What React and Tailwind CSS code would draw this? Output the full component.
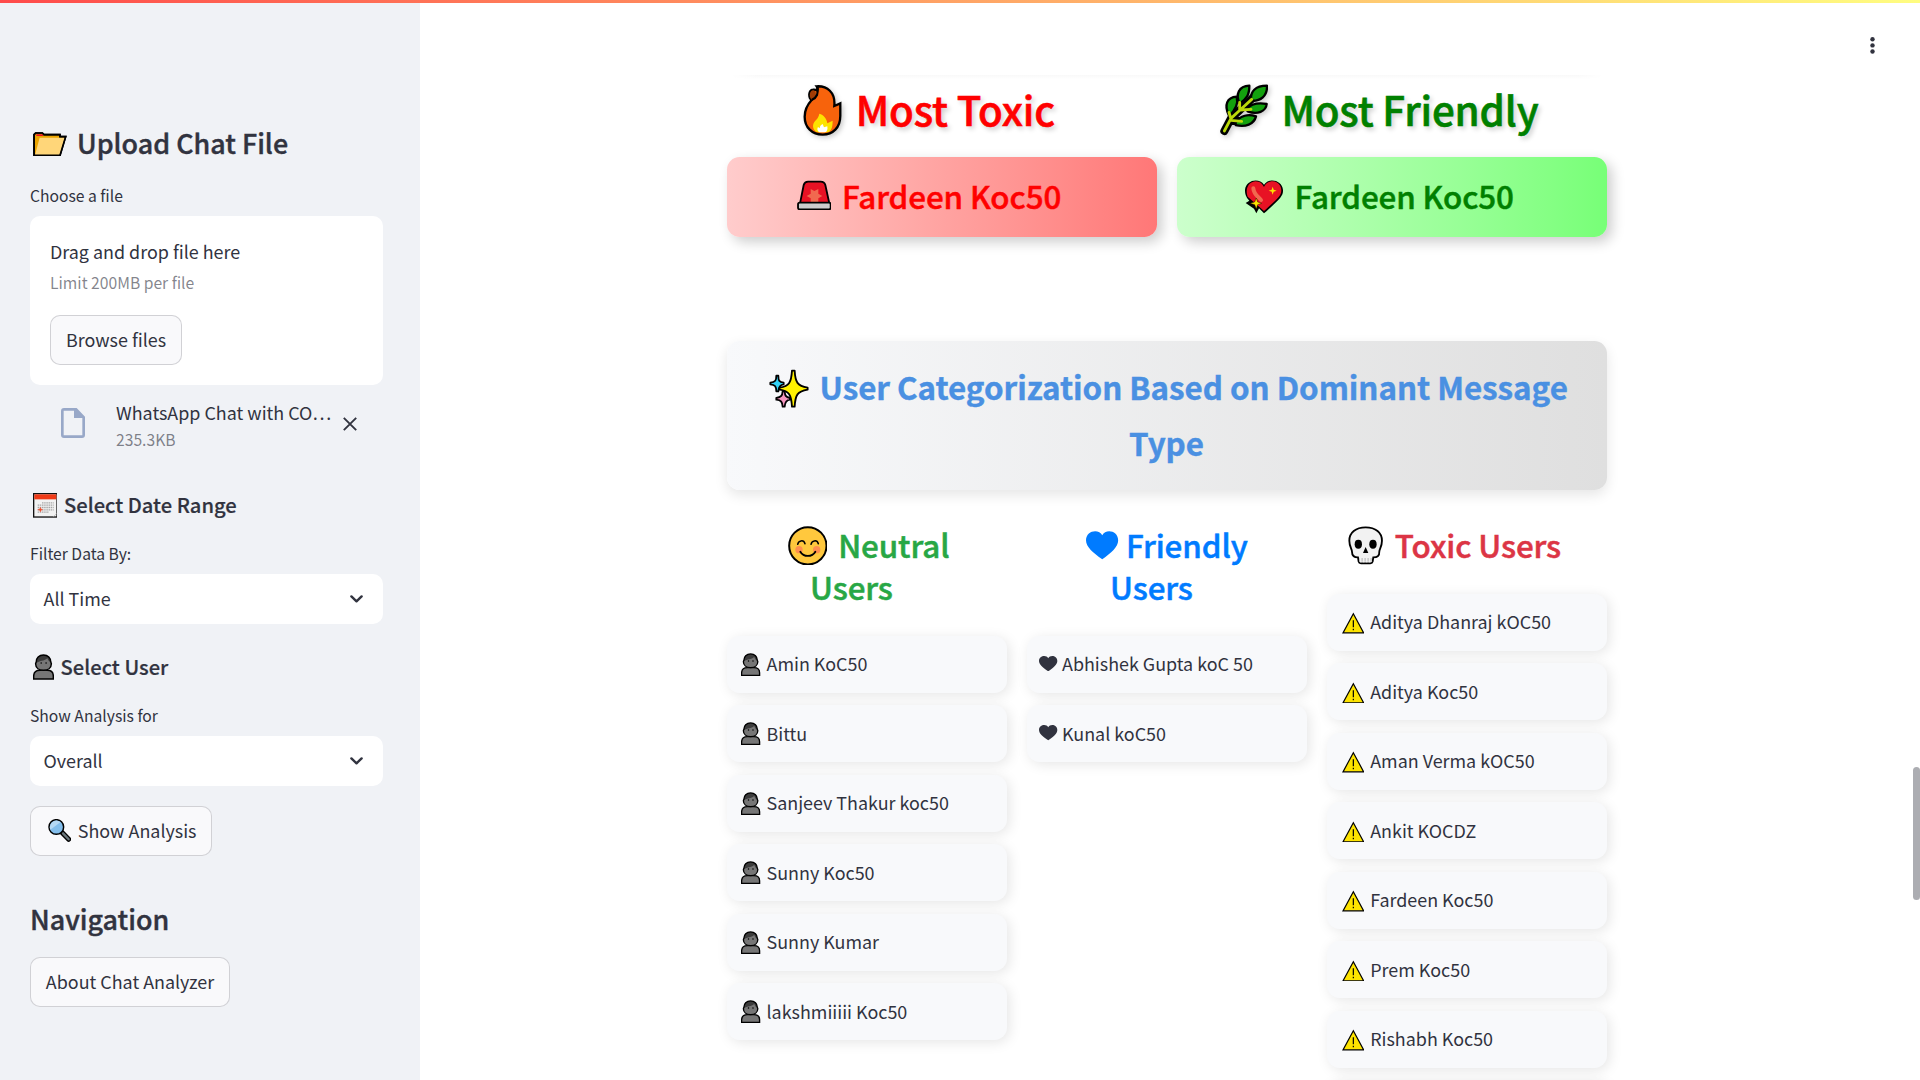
import React from "react";

const FONT = "font-['Noto_Sans_CJK_SC','Source_Sans_Pro',sans-serif]";

/* ---------- icons ---------- */

const Folder = ({ className }) => (
  <svg className={className} viewBox="100 96 101 72" width="33.7" height="24">
    <path d="M103 166V104L108 99H128L133 104H181V110H198L181 166Z" fill="#eba400" stroke="#000" strokeWidth="5" />
    <path d="M110 106V103H130V108H110Z" fill="#e81224" />
    <path d="M120 113H195L180 165H106Z" fill="#ffd679" />
    <path d="M103 166V104L108 99H128L133 104H181V110H198L181 166Z" fill="none" stroke="#000" strokeWidth="5" />
  </svg>
);

const Calendar = ({ className }) => (
  <svg className={className} viewBox="97 339 74 74" width="24.7" height="24.7">
    <rect x="99" y="341" width="70" height="70" fill="#f2f2f2" stroke="#111" strokeWidth="4" />
    <rect x="101" y="343" width="66" height="15" fill="#f03a17" />
    <path d="M124 368.500H159M111 375.500H159M111 382.500H159M111 389.500H159M111 396.500H145" stroke="#a6a6a6" strokeWidth="4" strokeDasharray="4.5 2" />
    <path d="M119 382L121 387L126 389L121 391L119 396L117 391L111 389L117 387Z" fill="#f04a28" stroke="#f04a28" strokeWidth="1" />
    <path d="M158 410L168 400" stroke="#bbb" strokeWidth="2" />
  </svg>
);

const Person = ({ className, w = 21.3, h = 25.7 }) => (
  <svg className={className} viewBox="97 823 65 77" width={w} height={h} preserveAspectRatio="none">
    <path d="M99 898V889Q100 872 118 872H140Q159 872 159 889V898Z" fill="#767676" stroke="#000" strokeWidth="4.5" />
    <path d="M129 826C143 826 151 836 151 846L153 852C153 864 143 872 129 872C115 872 105 864 105 852L107 846C107 836 115 826 129 826Z" fill="#767676" />
    <path d="M107 850C106 834 115 826 129 826C143 826 152 834 151 848C146 846 143 841 141 836C134 843 124 842 111 848Z" fill="#3b3b3b" />
    <path d="M129 826C143 826 151 836 151 846L153 852C153 864 143 872 129 872C115 872 105 864 105 852L107 846C107 836 115 826 129 826Z" fill="none" stroke="#000" strokeWidth="4.5" />
    <circle cx="122" cy="850" r="2.4" fill="#000" />
    <circle cx="137" cy="850" r="2.4" fill="#000" />
  </svg>
);

const Magnifier = ({ className }) => (
  <svg className={className} viewBox="144 359 70 69" width="23.3" height="23">
    <path d="M184 397L206 420" stroke="#000" strokeWidth="15" strokeLinecap="round" />
    <path d="M189 402L206 420" stroke="#6b787d" strokeWidth="7" strokeLinecap="round" />
    <circle cx="169" cy="383" r="22" fill="#83beec" stroke="#000" strokeWidth="4.5" />
    <path d="M151 391A20 20 0 0 1 182 368Z" fill="#b4d8f4" />
  </svg>
);

const Doc = ({ className }) => (
  <svg className={className} viewBox="183 84 72 90" width="24" height="30">
    <path d="M192 84H230L255 110V165Q255 174 246 174H192Q183 174 183 165V93Q183 84 192 84ZM191 92V166H247V114H222V92Z" fill="#98a8c8" fillRule="evenodd" />
  </svg>
);

const Cross = ({ className }) => (
  <svg className={className} viewBox="0 0 14 14" width="14" height="14">
    <path d="M0.8 0.8L13.2 13.2M13.2 0.8L0.8 13.2" stroke="#31333f" strokeWidth="1.9" />
  </svg>
);

const Chevron = () => (
  <svg viewBox="0 0 13 8" width="13" height="8">
    <path d="M1.4 1.4L6.5 6.3L11.6 1.4" fill="none" stroke="#31333f" strokeWidth="2.4" strokeLinecap="round" strokeLinejoin="round" />
  </svg>
);

const Fire = ({ className }) => (
  <svg className={className} viewBox="250 74 118 154" width="39.3" height="51.3">
    <path d="M291 78C322 76 348 96 344 137L362 129V167C362 202 340 223 309 223C277 223 255 201 255 169C255 143 266 130 276 119C266 112 266 90 280 88C286 87 288 88 292 90C296 87 294 82 291 78Z" fill="#f7630c" stroke="#000" strokeWidth="7" />
    <path d="M276 119C268 111 268 93 280 90C291 93 291 106 284 113Z" fill="#a23c05" />
    <path d="M276 119C291 113 298 98 292 80" fill="none" stroke="#000" strokeWidth="7" />
    <path d="M296 216C283 214 278 202 281 191C284 181 296 177 299 160C312 164 321 174 323 189L339 181C339 200 336 213 322 216Z" fill="#fde300" />
    <path d="M300 216C291 211 293 204 295 200L300 204C301 197 304 193 309 191L313 201L323 198C325 208 322 215 316 216Z" fill="#fff" />
  </svg>
);

const Siren = ({ className }) => (
  <svg className={className} viewBox="229 360 104 91" width="34.7" height="30.3">
    <path d="M238 430L249 375Q252 365 262 365H300Q311 365 314 375L326 430Z" fill="#e81224" stroke="#000" strokeWidth="5.5" />
    <path d="M270 387L281 393L293 387V401L305 408L293 415V429H270V415L258 408L270 401Z" fill="#f1694f" />
    <rect x="232" y="428" width="98" height="20" rx="5" fill="#ccc" stroke="#000" strokeWidth="5.5" />
  </svg>
);

const Herb = ({ className }) => (
  <svg className={className} viewBox="179 163 146 155" width="48.7" height="51.7">
    <path d="M192 304L212 266L280 202M216 274H245" stroke="#000" strokeWidth="24" strokeLinecap="round" strokeLinejoin="round" fill="none" />
    <g fill="#13a10e" stroke="#000" strokeWidth="7" strokeLinejoin="round">
      <path d="M272 211C270 186 284 168 320 168C321 199 301 215 272 213Z" />
      <path d="M238 222C224 194 236 169 267 168C267 196 259 207 238 222Z" />
      <path d="M206 258C190 226 200 203 229 201C235 224 226 241 206 258Z" />
      <path d="M258 238C276 219 297 219 319 223C317 245 291 256 262 245Z" />
      <path d="M226 278C240 257 264 253 287 260C281 284 255 293 226 286Z" />
    </g>
    <path d="M192 304L212 266L240 240L274 209M206 248L212 268M238 218V242M240 241L272 239M212 272L244 275" stroke="#bad80a" strokeWidth="8.5" fill="none" strokeLinecap="round" strokeLinejoin="round" />
  </svg>
);

const SparkHeart = ({ className }) => (
  <svg className={className} viewBox="251 447 120 107" width="40" height="35.7">
    <path d="M311 550L296 535L288 550L281 536L256 519L267 512C256 500 254 492 254 480C256 450 296 442 311 464C326 442 366 450 368 480C369 498 358 508 311 550Z" fill="#000" />
    <path d="M311 543L262 500C255 484 260 456 285 454C300 454 307 463 311 471C315 463 322 454 337 454C355 455 363 469 363 482C362 498 350 508 311 543Z" fill="#e81224" />
    <path d="M279 475C280 492 291 498 302 510" fill="none" stroke="#f1694f" strokeWidth="12" strokeLinecap="round" />
    <path d="M337 470L340 479L349 482L340 485L337 494L334 485L325 482L334 479Z" fill="#fde300" />
    <path d="M288 504L292 516L304 520L292 524L288 537L283 524L269 520L283 516Z" fill="#fde300" stroke="#000" strokeWidth="1.2" />
  </svg>
);

const Sparkles = ({ className }) => (
  <svg className={className} viewBox="177 146 121 118" width="40.3" height="39.3">
    <g stroke="#000" strokeWidth="5.5" strokeLinejoin="round">
      <path d="M199 166H205C205 180 207 186 221 187V192C209 193 206 200 205 213H199C199 199 196 193 181 192V187C196 186 199 180 199 166Z" fill="#31d2f7" />
      <path d="M218 213H224C225 225 227 231 240 233V238C228 239 225 246 224 259H218C217 246 214 239 199 238V233C214 231 217 225 218 213Z" fill="#f495bf" />
      <path d="M246 151H254C256 186 262 197 293 202V208C262 213 256 224 254 259H246C244 224 238 212 209 208V202C238 197 244 186 246 151Z" fill="#fff100" />
    </g>
  </svg>
);

const Smile = ({ className }) => (
  <svg className={className} viewBox="233 617 119 119" width="39.7" height="39.7">
    <circle cx="292.5" cy="676.5" r="56" fill="#ffc83d" stroke="#000" strokeWidth="6" />
    <circle cx="266" cy="688" r="11" fill="#ff8f4f" />
    <circle cx="319" cy="688" r="11" fill="#ff8f4f" />
    <path d="M262 672C264 660 280 657 284 670M302 672C304 660 320 657 324 670" fill="none" stroke="#000" strokeWidth="4.5" strokeLinecap="round" />
    <path d="M270 694C280 711 305 711 315 694" fill="none" stroke="#000" strokeWidth="5.5" strokeLinecap="round" />
  </svg>
);

const Skull = ({ className }) => (
  <svg className={className} viewBox="563 617 106 117" width="35.3" height="39">
    <path d="M616 621C646 621 665 637 665 661C665 679 657 686 657 694C658 708 650 711 639 711L637 724Q636 729 630 729H602Q596 729 595 724L593 711C582 711 575 708 575 694C575 686 567 679 567 661C567 637 586 621 616 621Z" fill="#f2f2f2" stroke="#000" strokeWidth="5.5" />
    <path d="M597 713H635V724H597Z" fill="#ccc" />
    <path d="M601 712V726M610 712V726M619 712V726M628 712V726" stroke="#f2f2f2" strokeWidth="4" />
    <ellipse cx="594" cy="672" rx="11" ry="13.5" />
    <ellipse cx="638" cy="672" rx="11" ry="13.5" />
    <path d="M616 680L624 698H608Z" />
  </svg>
);

const Heart = ({ className, w, h }) => (
  <svg className={className} viewBox="1128 632 98 86" width={w} height={h} preserveAspectRatio="none" fill="currentColor">
    <path d="M1177 717C1150 699 1128 680 1128 660C1128 630 1167 624 1177 645C1187 624 1225 630 1225 660C1225 680 1204 699 1177 717Z" />
  </svg>
);

const Warning = () => (
  <svg className="mt-[18.5px] ml-[14.5px] shrink-0" viewBox="94 125 68 65" width="22.7" height="21.7">
    <path d="M128 130L159 187.500H97Z" fill="#fde300" stroke="#000" strokeWidth="3.6" />
    <path d="M128 150V171M128 175V180" stroke="#000" strokeWidth="3.6" />
  </svg>
);

/* ---------- sidebar ---------- */

const Label = ({ children, className = "" }) => (
  <div className={`h-7 text-[15.68px] leading-7 whitespace-nowrap ${className}`}>{children}</div>
);

const Button = ({ children, className = "" }) => (
  <button className={`flex h-[50px] items-center rounded-[10px] border border-[#31333f]/20 bg-[#f9f9fb] pb-[3px] text-[17.92px] leading-8 whitespace-nowrap ${className}`}>
    {children}
  </button>
);

const Select = ({ children, className = "" }) => (
  <div className={`flex h-[50px] items-center justify-between rounded-[10px] bg-white pr-5 pl-[13.5px] text-[17.92px] leading-8 ${className}`}>
    <span className="-mt-[3px]">{children}</span>
    <Chevron />
  </div>
);

const SIDE_H2 = "text-[26.88px] leading-9 font-medium whitespace-nowrap [-webkit-text-stroke:0.4px]";
const SIDE_H3 = "flex h-7 items-start text-[20.16px] leading-7 font-medium whitespace-nowrap [-webkit-text-stroke:0.2px]";

const Sidebar = () => (
  <aside className="h-[1080px] w-[420px] shrink-0 bg-[#f0f2f6] px-[30px] pt-[125px]">
    <div className="w-[353px]">
      <h2 className={`flex h-9 items-start pl-[3.3px] ${SIDE_H2}`}>
        <Folder className="mt-[7px] mr-[10px]" />
        Upload Chat File
      </h2>
      <Label className="mt-[21px]">Choose a file</Label>
      <section className="mt-[6px] h-[169px] rounded-[10px] bg-white px-5 pt-[19px]">
        <div className="h-8 text-[17.92px] leading-8">Drag and drop file here</div>
        <Label className="mt-[2px] text-[#31333f]/60">Limit 200MB per file</Label>
        <Button className="mt-[18px] w-[132px] justify-center">Browse files</Button>
      </section>
      <div className="mt-[12px] flex h-[54px]">
        <Doc className="mt-[11px] ml-[31px] shrink-0" />
        <div className="ml-[31px] w-[227.5px] shrink-0">
          <div className="h-[31px] text-[17.92px] leading-[30px] whitespace-nowrap">WhatsApp Chat with CO…</div>
          <div className="h-6 text-[15.68px] leading-6 text-[#31333f]/60">235.3KB</div>
        </div>
        <Cross className="mt-5 -ml-[0.5px] shrink-0" />
      </div>
      <h3 className={`mt-10 pl-[2.5px] ${SIDE_H3}`}>
        <Calendar className="mt-[2px] mr-[6.8px]" />
        Select Date Range
      </h3>
      <Label className="mt-[21px]">Filter Data By:</Label>
      <Select className="mt-[6px]">All Time</Select>
      <h3 className={`mt-[29px] pl-[2.5px] ${SIDE_H3}`}>
        <Person className="mt-[1.3px] mr-[6.8px]" />
        Select User
      </h3>
      <Label className="mt-[21px]">Show Analysis for</Label>
      <Select className="mt-[6px]">Overall</Select>
      <Button className="mt-5 w-[182px] pl-[17px]">
        <Magnifier className="mt-[1.5px] mr-[6.5px]" />
        Show Analysis
      </Button>
      <h2 className={`mt-[45px] h-9 ${SIDE_H2}`}>Navigation</h2>
      <Button className="mt-5 w-[200px] justify-center">About Chat Analyzer</Button>
    </div>
  </aside>
);

/* ---------- main ---------- */

const UserCard = ({ icon, children }) => (
  <li className="flex h-[57px] items-start rounded-[12.5px] bg-[#f8f9fb] text-[17.92px] leading-8 whitespace-nowrap shadow-[2.5px_2.5px_12.5px_rgba(0,0,0,0.1)]">
    {icon}
    <span className="mt-[11.7px]">{children}</span>
  </li>
);

const neutral = ["Amin KoC50", "Bittu", "Sanjeev Thakur koc50", "Sunny Koc50", "Sunny Kumar", "lakshmiiiii Koc50"];
const friendly = ["Abhishek Gupta koC 50", "Kunal koC50"];
const toxic = ["Aditya Dhanraj kOC50", "Aditya Koc50", "Aman Verma kOC50", "Ankit KOCDZ", "Fardeen Koc50", "Prem Koc50", "Rishabh Koc50"];

const LIST = "mt-[27.5px] grid gap-[12.5px]";
const COL_HEAD = "text-[31.36px] leading-[42px] font-medium tracking-[-0.1px] whitespace-nowrap [-webkit-text-stroke:0.5px]";
const TOP_HEAD = "flex h-[54px] items-start text-[40.32px] leading-[54px] font-medium tracking-[-0.15px] whitespace-nowrap text-shadow-[2.5px_2.5px_5px_rgba(0,0,0,0.2)] [-webkit-text-stroke:0.6px]";
const WINNER = "mt-[21px] flex h-20 items-start rounded-[12.5px] text-[31.36px] leading-[56px] font-medium tracking-[-0.1px] whitespace-nowrap shadow-[5px_5px_12.5px_rgba(0,0,0,0.2)] [-webkit-text-stroke:0.5px]";

const Main = () => (
  <main className="h-[1080px] grow overflow-hidden bg-white pt-[75px] pl-[307px]">
    <div className="w-[880px]">
      <div className="mx-1 h-[4px] bg-linear-to-b from-[#f9f9f9] to-white mask-x-from-97%" />
      <div className="mt-[3px] grid grid-cols-[430px_430px] gap-5">
        <div>
          <h1 className={`pl-[76px] text-[#ff0000] ${TOP_HEAD}`}>
            <Fire className="mt-[2.5px] mr-[13.5px] drop-shadow-[2.5px_2.5px_2.5px_rgba(0,0,0,0.2)]" />
            Most Toxic
          </h1>
          <div className={`bg-linear-to-r from-[#ffcccc] to-[#ff7777] pl-[69.5px] text-[#ff0000] ${WINNER}`}>
            <Siren className="mt-[23px] mr-[10.7px]" />
            <span className="mt-[11px]">Fardeen Koc50</span>
          </div>
        </div>
        <div>
          <h1 className={`pl-[42.500px] text-[#008000] ${TOP_HEAD}`}>
            <Herb className="mt-[2px] mr-[13.3px] drop-shadow-[2.5px_2.5px_2.5px_rgba(0,0,0,0.2)]" />
            Most Friendly
          </h1>
          <div className={`bg-linear-to-r from-[#ccffcc] to-[#77ff77] pl-[66.5px] text-[#008000] ${WINNER}`}>
            <SparkHeart className="mt-[22px] mr-[11px]" />
            <span className="mt-[11px]">Fardeen Koc50</span>
          </div>
        </div>
      </div>

      <div className="mt-[104px] h-[149px] rounded-[12.5px] bg-linear-to-r from-[#f8f9fb] to-[#dfdfdf] pt-[17.5px] text-[31.36px] leading-[56px] font-bold tracking-[-0.04px] whitespace-nowrap text-[#4a90e2] shadow-[0_5px_12.5px_rgba(0,0,0,0.1)] [-webkit-text-stroke:0.4px]">
        <div className="flex h-14 items-start pl-[42px]">
          <Sparkles className="mt-[10px] mr-[10.2px]" />
          User Categorization Based on Dominant Message
        </div>
        <div className="h-14 pr-px text-center">Type</div>
      </div>

      <div className="mt-[34px] grid grid-cols-[280px_280px_280px] items-start gap-5">
        <section>
          <h2 className={`${COL_HEAD} text-[#28a745]`}>
            <div className="flex h-[42px] items-start pl-[60.5px]">
              <Smile className="mt-[1.5px] mr-[11px]" />
              Neutral
            </div>
            <div className="h-[42px] pl-[83px]">Users</div>
          </h2>
          <ul className={LIST}>
            {neutral.map((n) => (
              <UserCard key={n} icon={<Person className="mt-[17px] mr-[6px] ml-[14px]" w={19.5} h={23} />}>{n}</UserCard>
            ))}
          </ul>
        </section>
        <section>
          <h2 className={`${COL_HEAD} text-[#007bff]`}>
            <div className="flex h-[42px] items-start pl-[59px]">
              <Heart className="mt-[7px] mr-[7.5px]" w={32.5} h={28.5} />
              Friendly
            </div>
            <div className="h-[42px] pl-[83px]">Users</div>
          </h2>
          <ul className={LIST}>
            {friendly.map((n) => (
              <UserCard key={n} icon={<Heart className="mt-[20px] mr-[4.5px] ml-[12px]" w={18.5} h={15.5} />}>{n}</UserCard>
            ))}
          </ul>
        </section>
        <section>
          <h2 className={`${COL_HEAD} text-[#dc3545]`}>
            <div className="flex h-[42px] items-start pl-[20.500px]">
              <Skull className="mt-[1.5px] mr-[12px]" />
              Toxic Users
            </div>
          </h2>
          <ul className={LIST}>
            {toxic.map((n) => (
              <UserCard key={n} icon={<Warning />}>
                <span className="pl-[6px]">{n}</span>
              </UserCard>
            ))}
            <li className="h-[57px] rounded-[12.5px] bg-[#f8f9fb] shadow-[2.5px_2.5px_12.5px_rgba(0,0,0,0.1)]" />
          </ul>
        </section>
      </div>
    </div>
  </main>
);

export default function App() {
  return (
    <div className={`relative flex h-[1080px] w-[1920px] overflow-hidden bg-white text-[#31333f] ${FONT}`}>
      <Sidebar />
      <Main />
      <div className="absolute inset-x-0 top-0 h-[3px] bg-linear-to-r/srgb from-[#ff4b4b] to-[#fffd80]" />
      <svg className="absolute top-9 right-[45px]" width="5" height="19" viewBox="0 0 5 19" fill="#31333f">
        <circle cx="2.5" cy="3.3" r="2.2" />
        <circle cx="2.5" cy="9.4" r="2.2" />
        <circle cx="2.5" cy="15.5" r="2.2" />
      </svg>
      <div className="absolute top-[767px] right-0 h-[133px] w-[7px] rounded-full bg-[#acadb2]" />
    </div>
  );
}
